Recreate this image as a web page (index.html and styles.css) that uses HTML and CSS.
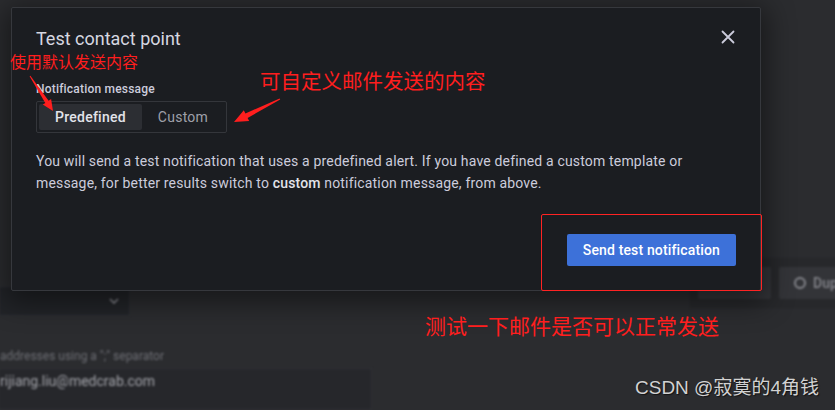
FILE: index.html
```html
<!DOCTYPE html>
<html lang="en">
<head>
  <meta charset="UTF-8" />
  <meta name="viewport" content="width=device-width, initial-scale=1.0"/>
  <title>Test contact point</title>
  <link rel="stylesheet" href="styles.css">
</head>
<body>
  <div class="page">
    <!-- page behind the modal, blurred -->
    <div class="backdrop">
      <div class="bg-row">
        <div class="bg-select">
          <svg width="10" height="6" viewBox="0 0 10 6"><path d="M1 1l4 4 4-4" fill="none" stroke="#8e8f96" stroke-width="1.5"/></svg>
        </div>
        <div class="bg-actions">
          <div class="bg-btn"></div>
          <div class="bg-btn bg-btn-dup"><span class="bg-dup-icon"></span>Dup</div>
        </div>
      </div>
      <div class="bg-label">addresses using a ";" separator</div>
      <div class="bg-input">rijiang.liu@medcrab.com</div>
    </div>

    <div class="modal">
      <div class="modal-header">
        <h2 class="modal-title">Test contact point</h2>
        <span class="close-btn">
          <svg width="16" height="16" viewBox="0 0 16 16"><path d="M2.5 2.5l11 11M13.5 2.5l-11 11" stroke="#ccccdc" stroke-width="1.8" stroke-linecap="round"/></svg>
        </span>
      </div>
      <div class="modal-body">
        <div class="field-label">Notification message</div>
        <div class="radio-group">
          <button class="radio-btn active">Predefined</button>
          <button class="radio-btn">Custom</button>
        </div>
        <p class="info">You will send a test notification that uses a predefined alert. If you have defined a custom template or message, for better results switch to <strong>custom</strong> notification message, from above.</p>
        <div class="modal-footer">
          <button class="btn-primary">Send test notification</button>
        </div>
      </div>
    </div>

    <!-- screenshot annotations -->
    <div class="note note-default">使用默认发送内容</div>
    <div class="note note-custom">可自定义邮件发送的内容</div>
    <div class="note note-test">测试一下邮件是否可以正常发送</div>
    <div class="mark-box"></div>
    <svg class="arrows" width="835" height="410" viewBox="0 0 835 410">
      <polygon fill="#ff1e1e" points="53,111 42.8,104.6 45.3,102.9 29.6,76.3 30.4,75.7 48.6,100.7 51.1,99.1"/>
      <polygon fill="#ff1e1e" points="234,122 249.2,121.1 247.6,117.9 280.2,99.6 279.6,98.4 245.4,113.5 243.8,110.3"/>
    </svg>
    <div class="watermark">CSDN @寂寞的4角钱</div>
  </div>
</body>
</html>
```

FILE: styles.css
```css
body {
  margin: 0;
  padding: 0;
  font-family: Roboto, "Noto Sans", sans-serif;
  background: #2b2c2f;
}

.page {
  position: relative;
  width: 835px;
  height: 410px;
  overflow: hidden;
  background: #2b2c2f;
}

/* background page */
.backdrop {
  position: absolute;
  inset: 0;
  padding-top: 250px;
  display: flex;
  flex-direction: column;
  filter: blur(1.2px);
  color: #8e8f96;
}

.bg-row {
  display: flex;
  align-items: flex-start;
  height: 80px;
}

.bg-select {
  margin-top: 36px;
  width: 130px;
  height: 30px;
  flex-shrink: 0;
  background: #222428;
  border: 1px solid #2e3034;
  border-left: none;
  display: flex;
  align-items: center;
  justify-content: flex-end;
  padding-right: 10px;
  box-sizing: border-box;
}

.bg-actions {
  margin-left: 560px;
  margin-top: 8px;
  padding: 9px 0 0 8px;
  display: flex;
  gap: 8px;
  background: #27282b;
  height: 50px;
  box-sizing: border-box;
  flex-shrink: 0;
}

.bg-btn {
  width: 73px;
  height: 32px;
  background: #333438;
  border-radius: 2px;
  flex-shrink: 0;
}

.bg-btn-dup {
  width: 90px;
  display: flex;
  align-items: center;
  gap: 7px;
  padding-left: 15px;
  box-sizing: border-box;
  font-size: 14px;
  font-weight: 500;
  color: #85868c;
}

.bg-dup-icon {
  width: 8px;
  height: 8px;
  border-radius: 50%;
  border: 2px solid #85868c;
  flex-shrink: 0;
}

.bg-label {
  margin-top: 30px;
  font-size: 12px;
  color: #6d6e74;
}

.bg-input {
  margin-top: 5px;
  width: 372px;
  height: 48px;
  background: #26272b;
  border: 1px solid #303136;
  border-left: none;
  box-sizing: border-box;
  padding: 4px 0 0 0;
  font-size: 14px;
  color: #a3a4aa;
}

/* modal */
.modal {
  position: absolute;
  left: 11px;
  top: 7px;
  width: 750px;
  box-sizing: border-box;
  background: #1b1d21;
  border: 1px solid #36383d;
  border-radius: 2px;
  box-shadow: 0 6px 28px 6px rgba(0, 0, 0, 0.45);
  color: #ccccdc;
}

.modal-header {
  display: flex;
  justify-content: space-between;
  align-items: center;
  padding: 20px 24px 0 24px;
}

.modal-title {
  margin: 0;
  font-size: 18px;
  line-height: 22px;
  font-weight: 400;
  color: #d6d7e0;
}

.close-btn {
  display: flex;
  margin-top: -4px;
}

.modal-body {
  padding: 0 24px 24px 24px;
}

.field-label {
  margin-top: 32px;
  font-size: 12px;
  line-height: 15px;
  font-weight: 500;
  letter-spacing: 0.2px;
  color: #ccccdc;
}

.radio-group {
  margin-top: 4px;
  display: inline-flex;
  padding: 2px;
  border: 1px solid #34363b;
  border-radius: 2px;
}

.radio-btn {
  height: 26px;
  padding: 0 16px;
  border: none;
  border-radius: 2px;
  background: transparent;
  font-family: Roboto, sans-serif;
  font-size: 14px;
  letter-spacing: 0.25px;
  color: #9fa0aa;
}

.radio-btn.active {
  background: #2c2e33;
  color: #e2e3ea;
  font-weight: 500;
}

.info {
  margin: 17px 0 0 0;
  font-size: 14px;
  line-height: 22px;
  letter-spacing: 0.17px;
  color: #ccccdc;
}

.info strong {
  font-weight: 500;
  color: #e2e3ea;
}

.modal-footer {
  margin-top: 40px;
  display: flex;
  justify-content: flex-end;
}

.btn-primary {
  height: 32px;
  padding: 0 16px;
  border: none;
  border-radius: 2px;
  background: #3d71d9;
  color: #fff;
  font-family: Roboto, sans-serif;
  font-size: 14px;
  font-weight: 500;
  letter-spacing: 0.15px;
}

/* annotations */
.note {
  position: absolute;
  color: #ff1e1e;
  font-family: "Noto Sans CJK SC", sans-serif;
  white-space: nowrap;
}

.note-default {
  left: 10px;
  top: 50px;
  font-size: 16px;
  line-height: 22px;
}

.note-custom {
  left: 260px;
  top: 66px;
  font-size: 20.5px;
  line-height: 28px;
}

.note-test {
  left: 425px;
  top: 310px;
  font-size: 21px;
  line-height: 30px;
}

.mark-box {
  position: absolute;
  left: 541px;
  top: 214px;
  width: 219px;
  height: 75px;
  border: 1px solid #ff2323;
  border-radius: 2px;
}

.arrows {
  position: absolute;
  left: 0;
  top: 0;
}

.watermark {
  position: absolute;
  left: 635px;
  top: 375px;
  font-family: "Liberation Sans", "Noto Sans CJK SC", sans-serif;
  font-size: 19px;
  line-height: 26px;
  color: #d2d2d2;
  text-shadow: 1px 1px 1px rgba(0, 0, 0, 0.6);
  white-space: nowrap;
}
```
